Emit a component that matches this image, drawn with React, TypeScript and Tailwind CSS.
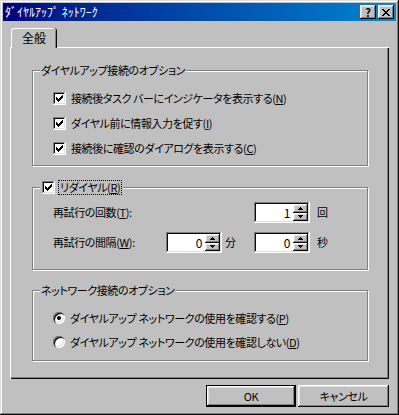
import React from "react";

const raised =
  "shadow-[inset_-1px_-1px_#0a0a0a,inset_1px_1px_#ffffff,inset_-2px_-2px_#808080,inset_2px_2px_#dfdfdf]";
const sunken =
  "shadow-[inset_-1px_-1px_#ffffff,inset_1px_1px_#808080,inset_-2px_-2px_#dfdfdf,inset_2px_2px_#0a0a0a]";

function Acc({ k }: { k: string }) {
  return (
    <>
      (<u>{k}</u>)
    </>
  );
}

function CheckBox() {
  return (
    <span className={`flex h-[13px] w-[13px] shrink-0 items-center justify-center bg-white ${sunken}`}>
      <svg width="7" height="7" viewBox="0 0 7 7">
        <path d="M0 2h1v1h1v1h1V3h1V2h1V1h1V0h1v3H6v1H5v1H4v1H3v1H2V6H1V5H0z" fill="#000" />
      </svg>
    </span>
  );
}

function Radio({ checked }: { checked?: boolean }) {
  return (
    <span className="relative flex h-[12px] w-[12px] shrink-0 items-center justify-center rounded-full bg-white shadow-[inset_1px_1px_#808080,inset_2px_2px_#0a0a0a,inset_-1px_-1px_#ffffff,inset_-2px_-2px_#dfdfdf]">
      {checked && <span className="h-[4px] w-[4px] rounded-full bg-black" />}
    </span>
  );
}

function Arrow({ up }: { up?: boolean }) {
  return (
    <span className={`flex h-[9px] w-[15px] items-center justify-center bg-[#c0c0c0] ${raised}`}>
      <svg width="5" height="3" viewBox="0 0 5 3">
        <path d={up ? "M2 0h1v1h1v1h1v1H0V2h1V1h1z" : "M0 0h5v1H4v1H3v1H2V2H1V1H0z"} fill="#000" />
      </svg>
    </span>
  );
}

function Spinner({ value }: { value: string }) {
  return (
    <div className={`flex h-[21px] w-[56px] shrink-0 items-center bg-white p-[2px] ${sunken}`}>
      <span className="flex-1 pr-[3px] text-right text-[12px] leading-none">{value}</span>
      <div className="flex h-[17px] flex-col justify-between">
        <Arrow up />
        <Arrow />
      </div>
    </div>
  );
}

function Group({
  label,
  height,
  children,
  className = "",
}: {
  label: React.ReactNode;
  height: string;
  children: React.ReactNode;
  className?: string;
}) {
  return (
    <div
      className={`relative w-[336px] ${height} border border-[#808080] shadow-[1px_1px_0_#ffffff,inset_1px_1px_0_#ffffff] ${className}`}
    >
      <div className="absolute left-[7px] top-[-8px] flex items-center bg-[#c0c0c0] px-[1px] leading-[15px]">
        {label}
      </div>
      {children}
    </div>
  );
}

export default function App() {
  return (
    <div className="flex h-[415px] w-[399px] flex-col bg-[#c0c0c0] p-[3px] font-['Noto_Sans_CJK_JP','Noto_Sans',sans-serif] text-[11px] tracking-[-0.4px] text-black [font-feature-settings:'palt'] shadow-[inset_-1px_-1px_#0a0a0a,inset_1px_1px_#dfdfdf,inset_-2px_-2px_#808080,inset_2px_2px_#ffffff]">
      {/* title bar */}
      <div className="flex h-[18px] items-center bg-gradient-to-r from-[#000080] to-[#1084d0] pl-[2px] pr-[2px]">
        <span className="text-[12px] leading-none tracking-normal text-white [font-feature-settings:normal]">ﾀﾞｲﾔﾙｱｯﾌﾟ ﾈｯﾄﾜｰｸ</span>
        <div className="ml-auto flex gap-[2px]">
          <span className={`flex h-[14px] w-[16px] items-center justify-center bg-[#c0c0c0] text-[11px] font-bold leading-none ${raised}`}>
            ?
          </span>
          <span className={`flex h-[14px] w-[16px] items-center justify-center bg-[#c0c0c0] ${raised}`}>
            <svg width="8" height="7" viewBox="0 0 8 7">
              <path d="M0 0h2v1h1v1h2V1h1V0h2v1H7v1H6v1H5v1h1v1h1v1h1v1H6V6H5V5H3v1H2v1H0V6h1V5h1V4h1V3H2V2H1V1H0z" fill="#000" />
            </svg>
          </span>
        </div>
      </div>

      <div className="flex flex-col px-[7px] pt-[7px]">
        {/* tab */}
        <div className="relative z-10 mb-[-1px] ml-[1px] flex h-[20px] w-[45px] items-start justify-center rounded-t-[3px] border-l border-t border-white bg-[#c0c0c0] pt-[2px] shadow-[inset_-1px_0_#808080,1px_0_#0a0a0a]">
          <span className="text-[12px] leading-[14px] tracking-normal">全般</span>
        </div>

        {/* panel */}
        <div className="flex h-[332px] w-[379px] flex-col pl-[22px] pt-[23px] shadow-[inset_1px_1px_#ffffff,inset_-1px_-1px_#0a0a0a,inset_-2px_-2px_#808080]">
          <Group label="ダイヤルアップ接続のオプション" height="h-[96px]" className="pl-[20px] pt-[15px]">
            {[
              <>接続後タスク バーにインジケータを表示する<Acc k="N" /></>,
              <>ダイヤル前に情報入力を促す<Acc k="I" /></>,
              <>接続後に確認のダイアログを表示する<Acc k="C" /></>,
            ].map((t, i) => (
              <div key={i} className="flex h-[25px] items-center gap-[5px]">
                <CheckBox />
                <span className="leading-none">{t}</span>
              </div>
            ))}
          </Group>

          <Group
            label={
              <span className="flex items-center gap-[3px] pl-[1px]">
                <CheckBox />
                <span className="border border-dotted border-black px-[1px] leading-[13px]">
                  リダイヤル<Acc k="R" />
                </span>
              </span>
            }
            height="h-[83px]"
            className="mt-[21px] pl-[20px] pt-[14px]"
          >
            <div className="flex h-[21px] items-center">
              <span className="w-[201px] leading-none">
                再試行の回数<Acc k="T" />:
              </span>
              <Spinner value="1" />
              <span className="ml-[7px] leading-none">回</span>
            </div>
            <div className="mt-[9px] flex h-[21px] items-center">
              <span className="w-[113px] leading-none">
                再試行の間隔<Acc k="W" />:
              </span>
              <Spinner value="0" />
              <span className="ml-[3px] w-[29px] leading-none">分</span>
              <Spinner value="0" />
              <span className="ml-[7px] leading-none">秒</span>
            </div>
          </Group>

          <Group label="ネットワーク接続のオプション" height="h-[71px]" className="mt-[20px] pl-[20px] pt-[15px]">
            <div className="flex h-[24px] items-center gap-[5px]">
              <Radio checked />
              <span className="leading-none">
                ダイヤルアップ ネットワークの使用を確認する<Acc k="P" />
              </span>
            </div>
            <div className="flex h-[24px] items-center gap-[5px]">
              <Radio />
              <span className="leading-none">
                ダイヤルアップ ネットワークの使用を確認しない<Acc k="D" />
              </span>
            </div>
          </Group>
        </div>

        {/* buttons */}
        <div className="mt-[6px] flex w-[379px] justify-end gap-[2px]">
          <button className="h-[22px] w-[90px] border border-black bg-[#c0c0c0] leading-none shadow-[inset_-1px_-1px_#0a0a0a,inset_1px_1px_#ffffff,inset_-2px_-2px_#808080,inset_2px_2px_#dfdfdf]">
            OK
          </button>
          <button className={`h-[22px] w-[91px] bg-[#c0c0c0] leading-none ${raised}`}>キャンセル</button>
        </div>
      </div>
    </div>
  );
}
